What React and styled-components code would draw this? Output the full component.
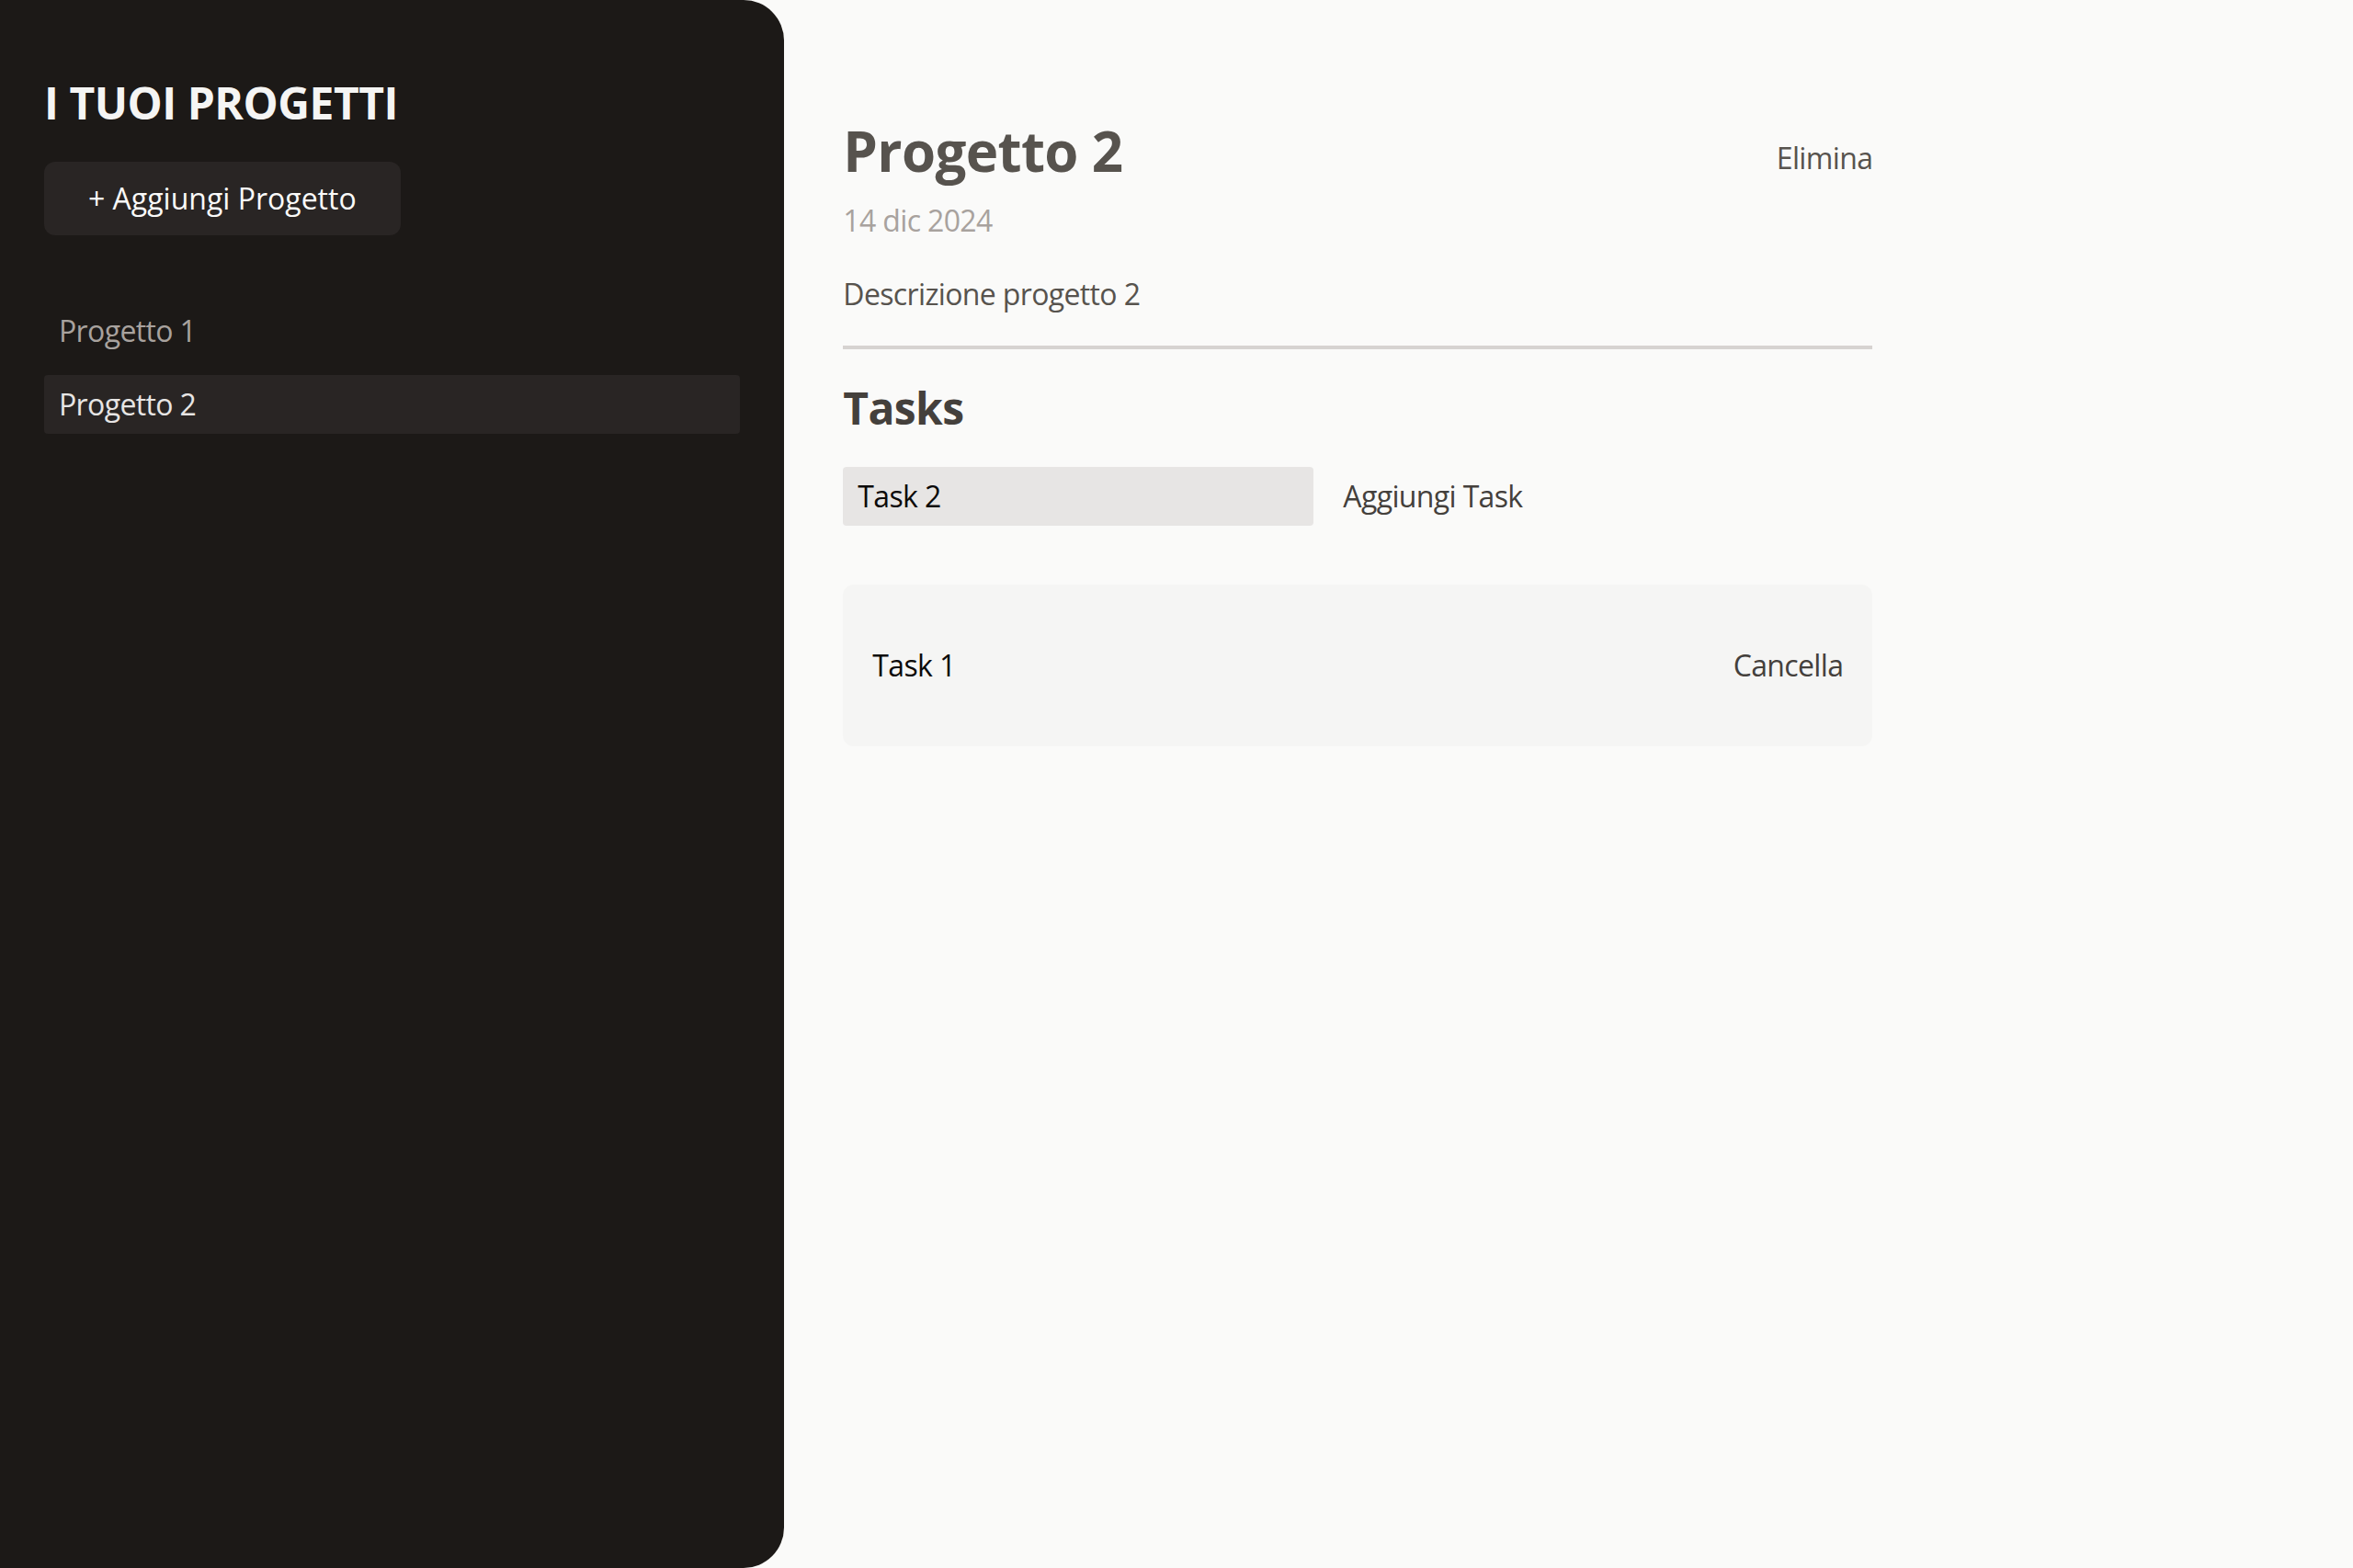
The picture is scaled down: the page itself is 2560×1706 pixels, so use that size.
import React, { useState } from 'react'
import styled, { createGlobalStyle } from 'styled-components'

const GlobalStyle = createGlobalStyle`
    * { box-sizing: border-box; }
    body {
        margin: 0;
        font-family: "Open Sans", "Noto Sans", sans-serif;
        font-size: 32px;
        line-height: 48px;
        letter-spacing: -0.02em;
        background-color: #fafaf9;
    }
    button, input { font: inherit; letter-spacing: inherit; }
`

const Main = styled.main`
    height: 1706px;
    display: flex;
    gap: 64px;
`
const Sidebar = styled.aside`
    width: 33.333%;
    flex-shrink: 0;
    padding: 80px 48px;
    background-color: #1c1917;
    color: #fafaf9;
    border-radius: 0 44px 44px 0;
`
const SidebarTitle = styled.h2`
    margin: 0 0 32px;
    font-size: 48px;
    line-height: 64px;
    font-weight: 700;
    letter-spacing: -0.01em;
    text-transform: uppercase;
    color: #f5f5f4;
`
const AddButton = styled.button`
    padding: 16px 48px;
    border: none;
    border-radius: 12px;
    background-color: #292524;
    color: #fafaf9;
    letter-spacing: 0;
    cursor: pointer;
`
const ProjectList = styled.ul`
    list-style: none;
    margin: 64px 0 0;
    padding: 0;
`
const ProjectItem = styled.li`
    display: flex;
`
const ProjectButton = styled.button`
    width: 100%;
    text-align: left;
    margin: 8px 0;
    padding: 8px 16px;
    border: none;
    border-radius: 4px;
    cursor: pointer;
    background-color: ${props => props.$selected ? "#292524" : "transparent"};
    color: ${props => props.$selected ? "#e7e5e4" : "#a8a29e"};
`
const Project = styled.div`
    width: 1120px;
    margin-top: 128px;
`
const Header = styled.header`
    padding-bottom: 32px;
    margin-bottom: 32px;
    border-bottom: 4px solid #d6d3d1;
`
const TitleRow = styled.div`
    display: flex;
    align-items: center;
    justify-content: space-between;
`
const Title = styled.h1`
    margin: 0 0 16px;
    font-size: 60px;
    line-height: 72px;
    font-weight: 700;
    color: #57534e;
`
const TextButton = styled.button`
    padding: 0;
    border: none;
    background: none;
    cursor: pointer;
    color: ${props => props.color || "#44403c"};
`
const DateText = styled.p`
    margin: 0 0 32px;
    color: #a8a29e;
`
const Description = styled.p`
    margin: 0;
    color: #57534e;
    white-space: pre-wrap;
`
const TasksTitle = styled.h2`
    margin: 0 0 32px;
    font-size: 48px;
    line-height: 64px;
    font-weight: 700;
    color: #44403c;
`
const NewTask = styled.div`
    display: flex;
    align-items: center;
    gap: 32px;
`
const TaskInput = styled.input`
    width: 512px;
    padding: 8px 16px;
    line-height: 48px;
    border: none;
    border-radius: 4px;
    background-color: #e7e5e4;
    color: #0c0a09;
    outline: none;
`
const TaskList = styled.ul`
    list-style: none;
    margin: 64px 0 0;
    padding: 32px;
    border-radius: 12px;
    background-color: #f5f5f4;
`
const TaskItem = styled.li`
    display: flex;
    justify-content: space-between;
    margin: 32px 0;
    color: #0c0a09;
`

export default function App() {
    const [task, setTask] = useState("Task 2")
    const projects = ["Progetto 1", "Progetto 2"]

    return (
        <>
            <GlobalStyle />
            <Main>
                <Sidebar>
                    <SidebarTitle>I tuoi progetti</SidebarTitle>
                    <AddButton>+ Aggiungi Progetto</AddButton>
                    <ProjectList>
                        {projects.map((p, i) => (
                            <ProjectItem key={p}>
                                <ProjectButton $selected={i === 1}>{p}</ProjectButton>
                            </ProjectItem>
                        ))}
                    </ProjectList>
                </Sidebar>

                <Project>
                    <Header>
                        <TitleRow>
                            <Title>Progetto 2</Title>
                            <TextButton color="#57534e">Elimina</TextButton>
                        </TitleRow>
                        <DateText>14 dic 2024</DateText>
                        <Description>Descrizione progetto 2</Description>
                    </Header>
                    <section>
                        <TasksTitle>Tasks</TasksTitle>
                        <NewTask>
                            <TaskInput value={task} onChange={e => setTask(e.target.value)} />
                            <TextButton>Aggiungi Task</TextButton>
                        </NewTask>
                        <TaskList>
                            <TaskItem>
                                <span>Task 1</span>
                                <TextButton>Cancella</TextButton>
                            </TaskItem>
                        </TaskList>
                    </section>
                </Project>
            </Main>
        </>
    )
}
